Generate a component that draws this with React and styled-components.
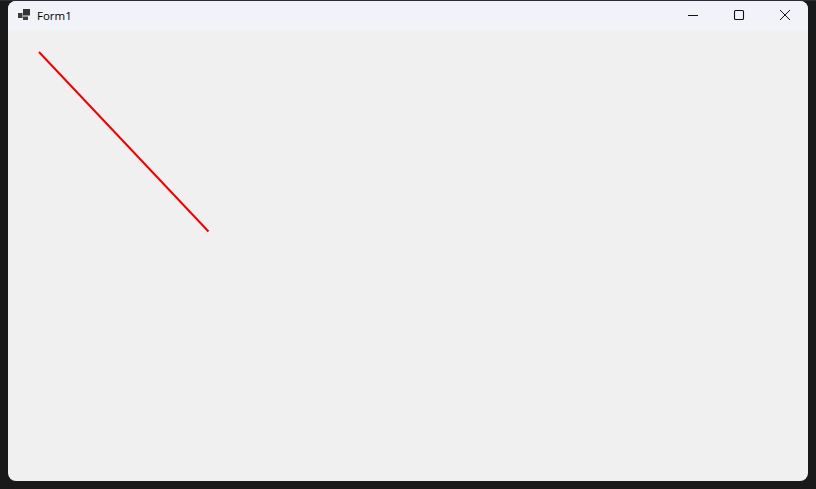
import styled, { createGlobalStyle } from 'styled-components'

const GlobalStyle = createGlobalStyle`
  html, body {
    margin: 0;
    height: 100%;
    background: #191919;
    overflow: hidden;
  }
`

const Desktop = styled.div`
  width: 816px;
  height: 489px;
  box-sizing: border-box;
  padding: 1px 8px 8px 8px;
  background: linear-gradient(#2b2b3a 0, #2b2b3a 1px, #191919 1px);
`

const Window = styled.div`
  width: 800px;
  height: 480px;
  display: flex;
  flex-direction: column;
  border-radius: 8px;
  overflow: hidden;
  background: #f0f0f0;
`

const TitleBar = styled.div`
  height: 31px;
  flex-shrink: 0;
  display: flex;
  align-items: center;
  background: linear-gradient(#f2f3f9 0, #f2f3f9 88%, #f0f0f0 100%);
  font-family: "Segoe UI", "Open Sans", "Noto Sans", sans-serif;
`

const AppIcon = styled.svg`
  width: 12px;
  height: 11px;
  margin: 0 0 4px 10px;
  flex-shrink: 0;
`

const Title = styled.span`
  margin: 0 0 2px 7px;
  font-size: 11.5px;
  color: #000;
  flex: 1;
`

const Controls = styled.div`
  display: flex;
  align-items: center;
  height: 100%;
`

const ControlButton = styled.button`
  width: 46px;
  height: 100%;
  padding: 0 0 3px 0;
  border: none;
  background: transparent;
  display: flex;
  align-items: center;
  justify-content: center;
  svg {
    width: 12px;
    height: 12px;
    display: block;
  }
`

const Canvas = styled.svg`
  flex: 1;
  display: block;
  width: 100%;
  min-height: 0;
`

const App = () => {
  return (
    <>
      <GlobalStyle />
      <Desktop>
        <Window>
          <TitleBar>
            <AppIcon viewBox="0 0 12 11">
              <rect x="0" y="4" width="4.5" height="5" fill="#3c3c3c" />
              <rect x="5" y="0" width="7" height="6.5" fill="#333" />
              <rect x="5" y="7.5" width="5" height="3.5" fill="#3c3c3c" />
            </AppIcon>
            <Title>Form1</Title>
            <Controls>
              <ControlButton aria-label="Minimize">
                <svg viewBox="0 0 12 12">
                  <path d="M1 6.5H11" stroke="#111" strokeWidth="1" fill="none" />
                </svg>
              </ControlButton>
              <ControlButton aria-label="Maximize">
                <svg viewBox="0 0 12 12">
                  <rect x="1.5" y="1.5" width="9" height="9" rx="1" stroke="#111" strokeWidth="1.1" fill="none" />
                </svg>
              </ControlButton>
              <ControlButton aria-label="Close">
                <svg viewBox="0 0 12 12">
                  <path d="M1 1L11 11M11 1L1 11" stroke="#111" strokeWidth="1" fill="none" />
                </svg>
              </ControlButton>
            </Controls>
          </TitleBar>
          <Canvas viewBox="0 0 800 449">
            <line x1="31" y1="20" x2="200.5" y2="199.5" stroke="#f00000" strokeWidth="2" />
          </Canvas>
        </Window>
      </Desktop>
    </>
  )
}

export default App
